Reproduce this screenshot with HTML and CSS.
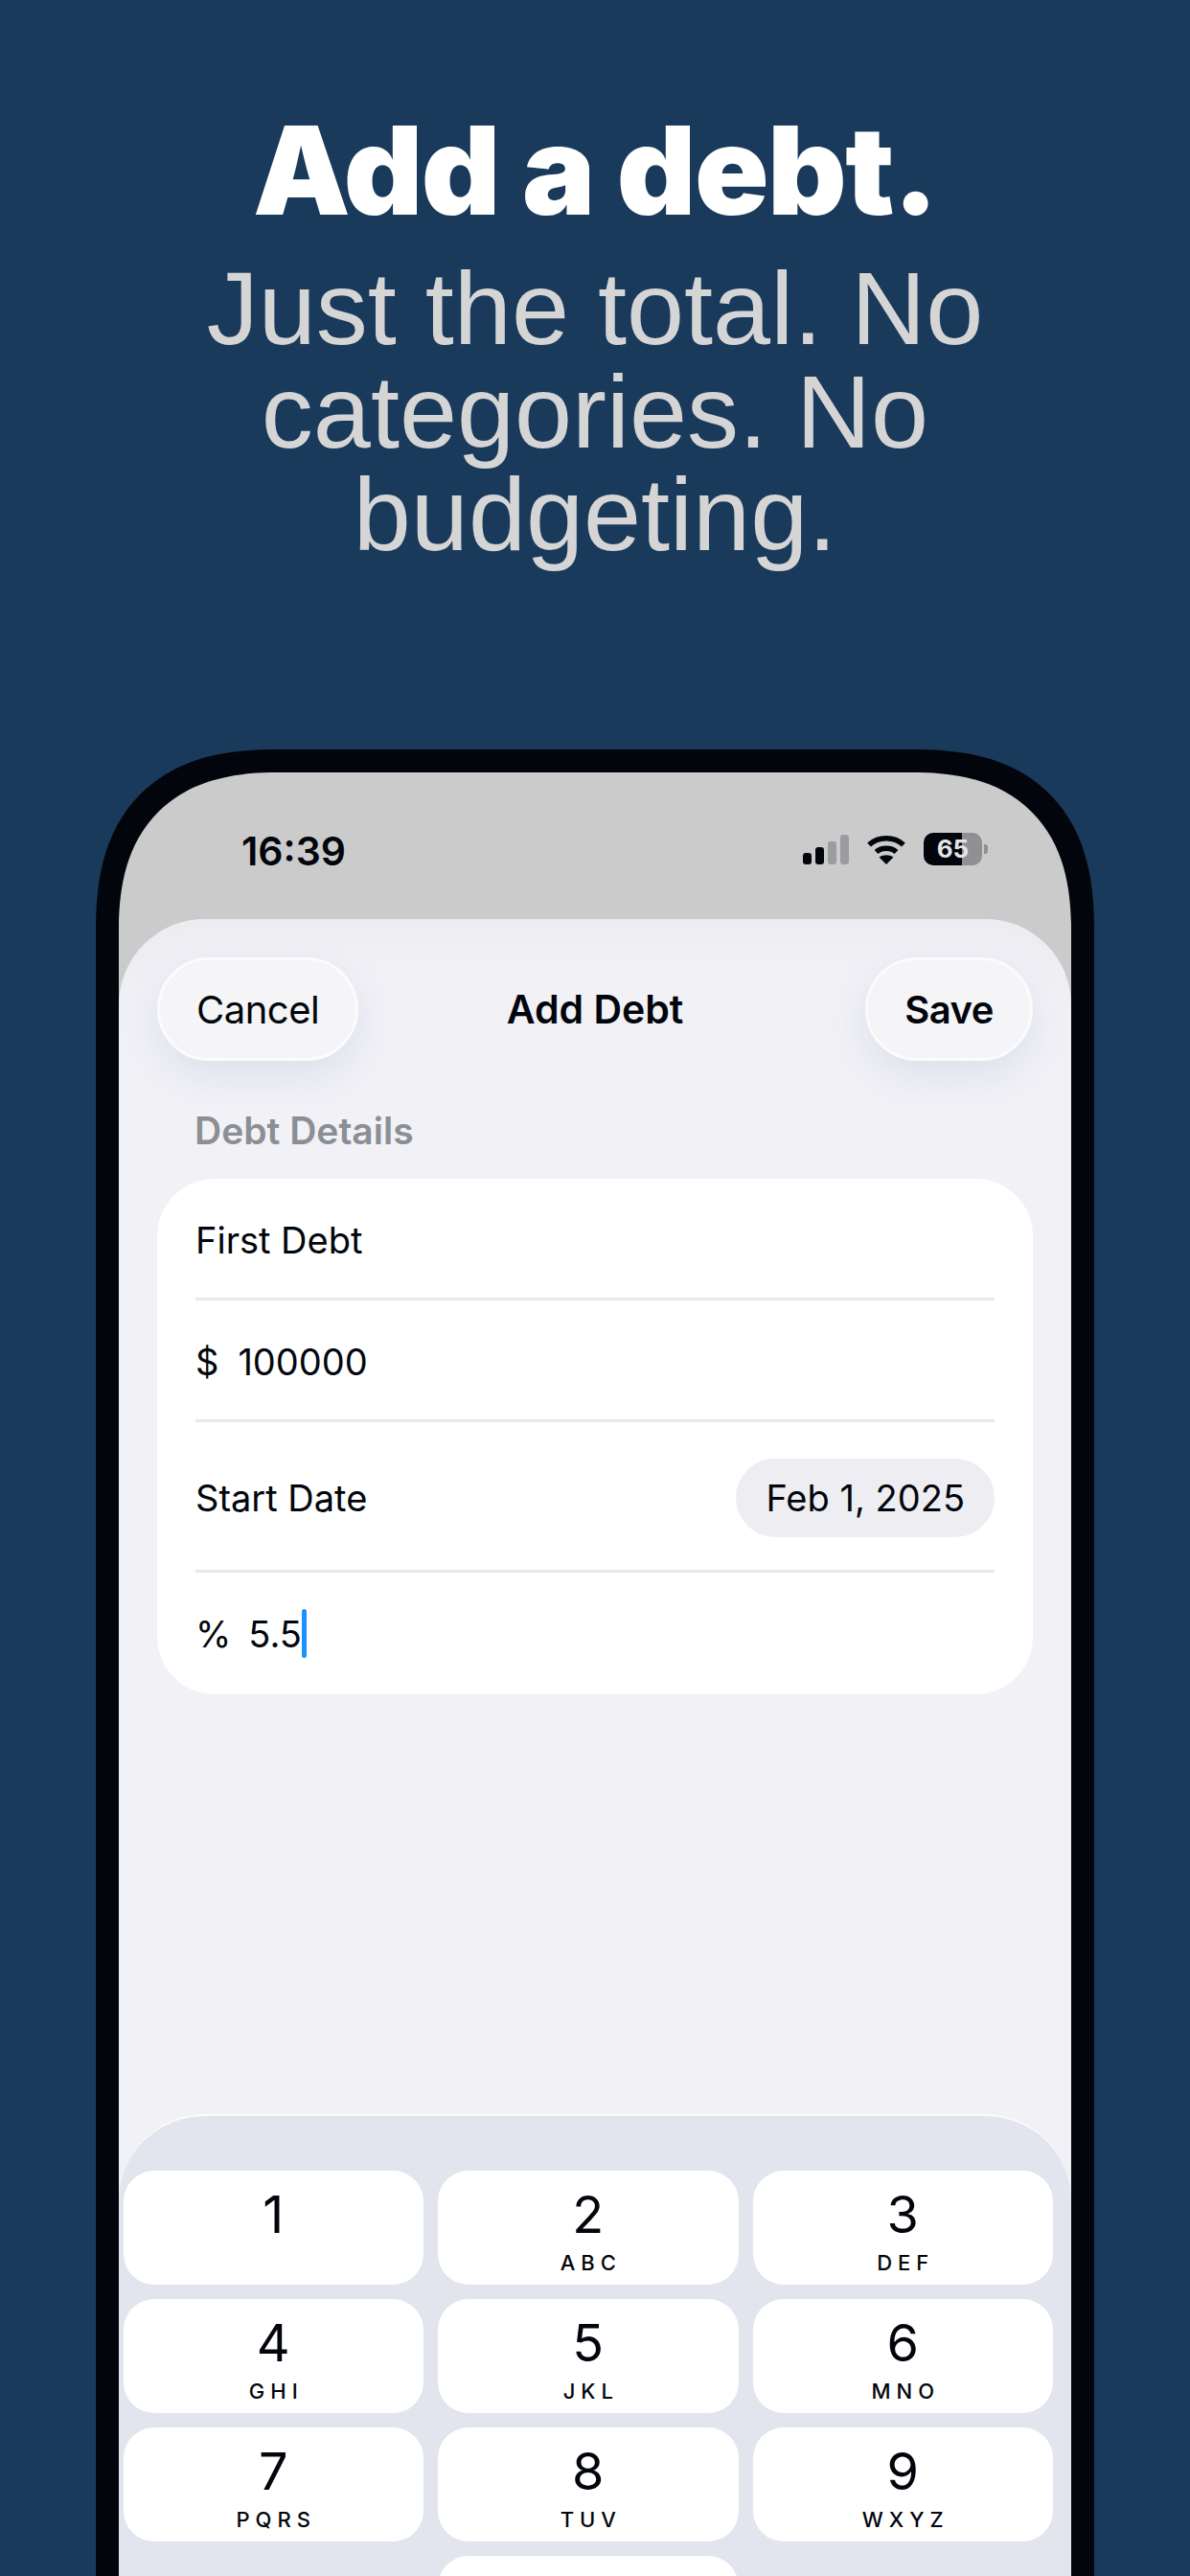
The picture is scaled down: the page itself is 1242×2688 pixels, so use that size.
FILE: index.html
```html
<!DOCTYPE html>
<html lang="en">
<head>
    <meta charset="UTF-8">
    <title>Add a debt</title>
    <link rel="stylesheet" href="styles.css">
</head>
<body>
    <div class="page">
        <header class="hero">
            <h1>Add a debt.</h1>
            <p>Just the total. No<br>categories. No<br>budgeting.</p>
        </header>
        <div class="phone">
            <div class="status-bar">
                <span class="time">16:39</span>
                <div class="status-icons">
                    <div class="signal">
                        <i class="bar bar-1"></i>
                        <i class="bar bar-2"></i>
                        <i class="bar bar-3 off"></i>
                        <i class="bar bar-4 off"></i>
                    </div>
                    <svg class="wifi" width="42" height="31" viewBox="0 0 42 31">
                        <path d="M3 10.5C13 1.5 29 1.5 39 10.5" fill="none" stroke="#02060c" stroke-width="5.5"/>
                        <path d="M10.5 18C16 13 26 13 31.5 18" fill="none" stroke="#02060c" stroke-width="5.5"/>
                        <path d="M21 31L13.5 23.5C18 20.5 24 20.5 28.5 23.5Z" fill="#02060c"/>
                    </svg>
                    <div class="battery">
                        <div class="battery-body"><span>65</span></div>
                        <i class="battery-nub"></i>
                    </div>
                </div>
            </div>
            <div class="sheet">
                <div class="sheet-nav">
                    <button class="nav-btn cancel">Cancel</button>
                    <span class="sheet-title">Add Debt</span>
                    <button class="nav-btn save">Save</button>
                </div>
                <div class="section-label">Debt Details</div>
                <div class="card">
                    <div class="row">First Debt</div>
                    <div class="row"><span class="prefix">$</span>100000</div>
                    <div class="row row-date">
                        <span>Start Date</span>
                        <span class="date-pill">Feb 1, 2025</span>
                    </div>
                    <div class="row"><span class="prefix percent">%</span>5.5<i class="caret"></i></div>
                </div>
                <div class="keyboard">
                    <div class="key"><span class="digit">1</span></div>
                    <div class="key"><span class="digit">2</span><span class="letters">ABC</span></div>
                    <div class="key"><span class="digit">3</span><span class="letters">DEF</span></div>
                    <div class="key"><span class="digit">4</span><span class="letters">GHI</span></div>
                    <div class="key"><span class="digit">5</span><span class="letters">JKL</span></div>
                    <div class="key"><span class="digit">6</span><span class="letters">MNO</span></div>
                    <div class="key"><span class="digit">7</span><span class="letters">PQRS</span></div>
                    <div class="key"><span class="digit">8</span><span class="letters">TUV</span></div>
                    <div class="key"><span class="digit">9</span><span class="letters">WXYZ</span></div>
                    <div class="key key-zero"></div>
                </div>
            </div>
        </div>
    </div>
</body>
</html>
```

FILE: styles.css
```css
body {
    margin: 0;
    background-color: #1a3a5c;
    font-family: Inter, "Liberation Sans", sans-serif;
    color: #02060c;
}
.page {
    width: 1242px;
    height: 2688px;
    overflow: hidden;
}
.hero {
    height: 782px;
    box-sizing: border-box;
    padding-top: 108px;
    text-align: center;
}
.hero h1 {
    margin: 0;
    color: #ffffff;
    font-size: 128px;
    line-height: 140px;
    font-weight: 900;
    letter-spacing: -1.5px;
}
.hero p {
    margin: 20px 0 0;
    color: #d5d5d5;
    font-family: "Liberation Sans", Arial, sans-serif;
    font-size: 108px;
    line-height: 107.5px;
}
.phone {
    width: 994px;
    height: 1882px;
    margin-left: 100px;
    border: 24px solid #02060c;
    border-bottom: none;
    border-radius: 190px 190px 0 0;
    corner-shape: superellipse(1.3);
    background-color: #cbcbcb;
    overflow: hidden;
}
.status-bar {
    height: 153px;
    position: relative;
    display: flex;
    justify-content: space-between;
    box-sizing: border-box;
    padding: 57px 87px 0 128px;
}
.time {
    font-size: 41px;
    line-height: 50px;
    font-weight: 600;
}
.status-icons {
    display: flex;
    align-items: flex-start;
    padding-top: 6px;
}
.signal {
    display: flex;
    align-items: flex-end;
    gap: 4px;
    height: 31px;
    margin: 2px 18px 0 0;
}
.bar {
    width: 9px;
    border-radius: 3px;
    background-color: #02060c;
}
.bar-1 { height: 12px; }
.bar-2 { height: 18px; }
.bar-3 { height: 24px; }
.bar-4 { height: 31px; }
.bar.off {
    background-color: #9a9c9f;
}
.wifi {
    margin: 2px 18px 0 0;
}
.battery {
    display: flex;
    align-items: center;
}
.battery-body {
    width: 61px;
    height: 34px;
    border-radius: 10px;
    background: linear-gradient(90deg, #02060c 0 40px, #8e9094 40px);
    color: #e4e4e6;
    font-size: 26px;
    font-weight: 700;
    line-height: 34px;
    text-align: center;
}
.battery-nub {
    width: 4px;
    height: 10px;
    margin-left: 2px;
    border-radius: 0 3px 3px 0;
    background-color: #8e9094;
}
.sheet {
    height: 1729px;
    border-radius: 90px 90px 0 0;
    background-color: #f1f1f6;
    box-shadow: inset 0 40px 40px -20px #ebebf0;
}
.sheet-nav {
    display: grid;
    grid-template-columns: 1fr auto 1fr;
    align-items: center;
    padding: 40px 40px 0;
}
.nav-btn {
    height: 108px;
    box-sizing: border-box;
    padding: 0 38px;
    border: 3px solid #fbfbfd;
    border-radius: 54px;
    background-color: #f5f5f8;
    box-shadow: 0 14px 40px #dde0eb;
    color: #02060c;
    font-family: Inter, sans-serif;
    font-size: 40px;
    letter-spacing: -0.5px;
}
.cancel {
    justify-self: start;
}
.save {
    justify-self: end;
    font-weight: 600;
}
.sheet-title {
    font-size: 41px;
    font-weight: 600;
}
.section-label {
    margin: 51px 0 0 79px;
    color: #8a8f95;
    font-size: 39px;
    line-height: 44px;
    font-weight: 600;
}
.card {
    margin: 28px 40px 0;
    padding: 0 40px;
    border-radius: 60px;
    background-color: #ffffff;
}
.row {
    display: flex;
    align-items: center;
    box-sizing: border-box;
    height: 127px;
    padding-top: 3px;
    border-bottom: 3px solid #e8e8ef;
    font-size: 38px;
}
.row:last-child {
    padding-top: 0;
    border-bottom: none;
}
.row-date {
    justify-content: space-between;
    height: 157px;
}
.prefix {
    margin-right: 20px;
}
.prefix.percent {
    margin-right: 18px;
}
.date-pill {
    height: 82px;
    padding: 0 31px;
    border-radius: 41px;
    background-color: #eeeef2;
    line-height: 82px;
}
.caret {
    width: 5px;
    height: 51px;
    border-radius: 3px;
    background-color: #1e8fff;
}
.keyboard {
    display: grid;
    grid-template-columns: repeat(3, 313.5px);
    grid-auto-rows: 119px;
    gap: 15px;
    margin-top: 438px;
    padding: 57px 0 0 4.5px;
    border-top: 2px solid #fbfbfd;
    border-radius: 90px 90px 0 0;
    background-color: #e2e5ee;
}
.key {
    display: flex;
    flex-direction: column;
    align-items: center;
    border-radius: 32px;
    background-color: #ffffff;
}
.key-zero {
    grid-column: 2;
}
.digit {
    margin-top: 19px;
    font-size: 54px;
    line-height: 54px;
}
.letters {
    margin-top: 10px;
    padding-left: 6px;
    font-size: 22px;
    line-height: 26px;
    font-weight: 500;
    letter-spacing: 6px;
}
```
